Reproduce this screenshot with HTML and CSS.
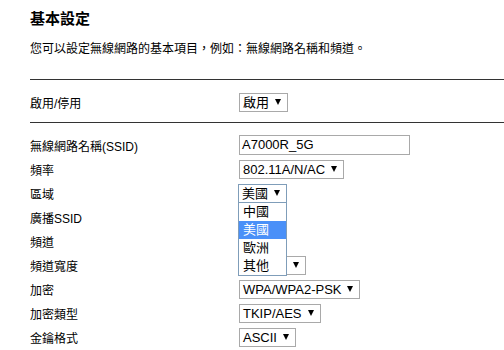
FILE: index.html
```html
<!DOCTYPE html>
<html lang="zh-Hant">
<head>
    <meta charset="UTF-8">
    <meta name="viewport" content="width=device-width, initial-scale=1.0">
    <title>基本設定</title>
    <link rel="stylesheet" href="styles.css">
</head>
<body>
    <div class="page">
        <h2 class="title">基本設定</h2>
        <p class="desc">您可以設定無線網路的基本項目，例如：無線網路名稱和頻道。</p>

        <div class="rule"></div>

        <div class="row first">
            <span class="label">啟用/停用</span>
            <span class="select">啟用<i class="arrow"></i></span>
        </div>

        <div class="rule second"></div>

        <div class="form">
            <div class="row">
                <span class="label">無線網路名稱(SSID)</span>
                <span class="textbox">A7000R_5G</span>
            </div>
            <div class="row">
                <span class="label">頻率</span>
                <span class="select">802.11A/N/AC<i class="arrow"></i></span>
            </div>
            <div class="row">
                <span class="label">區域</span>
                <span class="select-wrap">
                    <span class="select focused">美國<i class="arrow"></i></span>
                    <!-- opened list of the region select -->
                    <ul class="options">
                        <li>中國</li>
                        <li class="active">美國</li>
                        <li>歐洲</li>
                        <li>其他</li>
                    </ul>
                </span>
            </div>
            <div class="row">
                <span class="label">廣播SSID</span>
            </div>
            <div class="row">
                <span class="label">頻道</span>
                <span class="select covered"><i class="arrow"></i></span>
            </div>
            <div class="row">
                <span class="label">頻道寬度</span>
                <span class="select covered wide"><i class="arrow"></i></span>
            </div>
            <div class="row">
                <span class="label">加密</span>
                <span class="select">WPA/WPA2-PSK<i class="arrow"></i></span>
            </div>
            <div class="row">
                <span class="label">加密類型</span>
                <span class="select">TKIP/AES<i class="arrow"></i></span>
            </div>
            <div class="row">
                <span class="label">金鑰格式</span>
                <span class="select">ASCII<i class="arrow"></i></span>
            </div>
        </div>
    </div>
</body>
</html>
```

FILE: styles.css
```css
body {
    margin: 0;
    background-color: white;
    color: #000;
    font-family: "Liberation Sans", "Noto Sans CJK TC", sans-serif;
    font-size: 12px;
}
.page {
    padding: 9px 0 0 30px;
    overflow: hidden;
}
.title {
    margin: 0;
    font-size: 15px;
    font-weight: bold;
    line-height: 20px;
}
.desc {
    margin: 10px 0 0 0;
    line-height: 20px;
}
.rule {
    margin-top: 20px;
    border-top: 1px solid #333;
}
.rule.second {
    margin-top: 8px;
}
.first {
    margin-top: 10px;
}
.form {
    margin-top: 10px;
}
.row {
    display: flex;
    align-items: center;
    height: 24px;
}
.label {
    width: 209px;
    flex-shrink: 0;
}
.select {
    display: inline-flex;
    align-items: center;
    box-sizing: border-box;
    height: 19px;
    padding: 0 6px 0 3px;
    border: 1px solid #a9a9a9;
    background-color: white;
    font-size: 13px;
    line-height: 17px;
}
.select.focused {
    border-color: #7f9db9;
    margin-left: -1px;
}
/* selects hidden under the open list: only their right end shows */
.select.covered {
    justify-content: flex-end;
    width: 44px;
}
.select.covered.wide {
    width: 67px;
}
.arrow {
    display: inline-block;
    margin-left: 6px;
    width: 0;
    height: 0;
    border-left: 3.5px solid transparent;
    border-right: 3.5px solid transparent;
    border-top: 6px solid #000;
}
.textbox {
    box-sizing: border-box;
    width: 171px;
    height: 20px;
    padding: 0 2px;
    border: 1px solid #a9a9a9;
    font-size: 13px;
    line-height: 18px;
}
.select-wrap {
    position: relative;
    display: inline-block;
    height: 19px;
}
.options {
    position: absolute;
    top: 19px;
    left: -1px;
    z-index: 2;
    width: 49px;
    box-sizing: border-box;
    margin: 0;
    padding: 0;
    list-style: none;
    background-color: white;
    border: 1px solid #7f9db9;
    border-top: none;
    font-size: 13px;
}
.options li {
    height: 18px;
    line-height: 18px;
    padding-left: 4px;
}
.options li.active {
    background-color: #4a90f8;
    color: white;
}
```
